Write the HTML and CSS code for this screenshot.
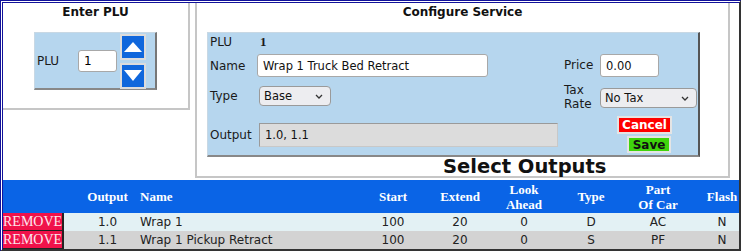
FILE: index.html
```html
<!DOCTYPE html>
<html lang="en">
<head>
  <meta charset="UTF-8" />
  <title>Configure Service</title>
  <link rel="stylesheet" href="styles.css">
</head>
<body>
  <div class="page">
    <div class="top">
      <div class="plu-panel">
        <div class="panel-title">Enter PLU</div>
        <div class="plu-box">
          <label class="plu-label">PLU</label>
          <input class="plu-input" value="1" />
          <div class="spin">
            <button class="spin-btn" title="Up">
              <svg width="22" height="22" viewBox="0 0 22 22"><polygon points="2,16 20,16 11,6" fill="#fff"/></svg>
            </button>
            <button class="spin-btn" title="Down">
              <svg width="22" height="22" viewBox="0 0 22 22"><polygon points="2,5 20,5 11,16" fill="#fff"/></svg>
            </button>
          </div>
        </div>
      </div>

      <div class="service-panel">
        <div class="panel-title">Configure Service</div>
        <div class="config">
          <div class="config-left">
            <div class="row row-plu">
              <span class="lbl">PLU</span>
              <span class="plu-num">1</span>
            </div>
            <div class="row row-name">
              <span class="lbl">Name</span>
              <input class="txt name-input" value="Wrap 1 Truck Bed Retract" />
            </div>
            <div class="row row-type">
              <span class="lbl">Type</span>
              <span class="sel-wrap type-wrap">
                <select class="sel type-sel"><option>Base</option></select>
                <svg class="chev" width="8" height="5" viewBox="0 0 8 5"><polyline points="1,1 4,4 7,1" fill="none" stroke="#333" stroke-width="1.3"/></svg>
              </span>
            </div>
            <div class="row row-output">
              <span class="lbl">Output</span>
              <input class="txt output-input" value="1.0, 1.1" readonly />
            </div>
          </div>
          <div class="config-right">
            <div class="row row-price">
              <span class="lbl-r">Price</span>
              <input class="txt price-input" value="0.00" />
            </div>
            <div class="row row-tax">
              <span class="lbl-r">Tax<br>Rate</span>
              <span class="sel-wrap">
                <select class="sel tax-sel"><option>No Tax</option></select>
                <svg class="chev" width="8" height="5" viewBox="0 0 8 5"><polyline points="1,1 4,4 7,1" fill="none" stroke="#333" stroke-width="1.3"/></svg>
              </span>
            </div>
            <div class="actions">
              <button class="btn-cancel">Cancel</button>
              <button class="btn-save">Save</button>
            </div>
          </div>
        </div>
        <div class="section-title">Select Outputs</div>
      </div>
    </div>

    <table class="outputs">
      <colgroup>
        <col style="width:75px"><col style="width:59px"><col style="width:223px">
        <col style="width:66px"><col style="width:68px"><col style="width:60px">
        <col style="width:74px"><col style="width:60px"><col style="width:68px">
      </colgroup>
      <thead>
        <tr>
          <th></th>
          <th>Output</th>
          <th class="left">Name</th>
          <th>Start</th>
          <th>Extend</th>
          <th>Look<br>Ahead</th>
          <th>Type</th>
          <th>Part<br>Of Car</th>
          <th>Flash</th>
        </tr>
      </thead>
      <tbody>
        <tr class="odd">
          <td class="rm"><button class="remove">REMOVE</button></td>
          <td>1.0</td>
          <td class="left">Wrap 1</td>
          <td>100</td>
          <td>20</td>
          <td>0</td>
          <td>D</td>
          <td>AC</td>
          <td>N</td>
        </tr>
        <tr class="even">
          <td class="rm"><button class="remove">REMOVE</button></td>
          <td>1.1</td>
          <td class="left">Wrap 1 Pickup Retract</td>
          <td>100</td>
          <td>20</td>
          <td>0</td>
          <td>S</td>
          <td>PF</td>
          <td>N</td>
        </tr>
      </tbody>
    </table>
  </div>
</body>
</html>
```

FILE: styles.css
```css
body { margin: 0; font-family: "DejaVu Sans", Verdana, sans-serif; font-size: 12px; color: #1a1a1a; }
.page { width: 741px; height: 251px; box-sizing: border-box; overflow: hidden; border-top: 3px double #11119a; border-left: 3px double #11119a; border-right: 2px solid #333; border-bottom: 2px solid #333; }

.top { display: flex; height: 177px; }
.panel-title { font-weight: bold; text-align: center; line-height: 16px; padding-top: 1px; color: #111; }

/* enter plu */
.plu-panel { width: 185px; height: 105px; border-right: 2px solid #c6c6c6; border-bottom: 2px solid #c6c6c6; }
.plu-box { display: flex; align-items: center; box-sizing: border-box; width: 123px; height: 58px; margin: 12px 0 0 31px; padding: 1px 0 0 2px; background: #b6d6ee; border-top: 1px solid #c8d8e4; border-left: 1px solid #c8d8e4; border-right: 2px solid #777; border-bottom: 2px solid #888; }
.plu-label { width: 41px; }
.plu-input { box-sizing: border-box; width: 39px; height: 22px; padding: 0 5px; border: 1px solid #a8a8a8; border-radius: 3px; font: 12px "DejaVu Sans", sans-serif; }
.spin { display: flex; flex-direction: column; gap: 3px; margin-left: 3px; }
.spin-btn { box-sizing: border-box; width: 26px; height: 26px; padding: 0; background: #1067dc; border: 2px solid #dcdcdc; display: flex; align-items: center; justify-content: center; }

/* configure service */
.service-panel { width: 531px; height: 173px; margin-left: 5px; border-left: 2px solid #c6c6c6; border-right: 2px solid #c6c6c6; border-bottom: 2px solid #c6c6c6; }
.config { display: flex; box-sizing: border-box; width: 493px; height: 125px; margin: 12px 0 0 10px; background: #b6d6ee; border-top: 1px solid #c8d8e4; border-left: 1px solid #c8d8e4; border-right: 2px solid #555; border-bottom: 2px solid #888; }
.config-left { width: 356px; padding: 2px 0 0 2px; box-sizing: border-box; }
.config-right { flex: 1; padding-top: 21px; }
.row { display: flex; align-items: center; }
.lbl { width: 47px; }
.lbl-r { width: 36px; line-height: 13.5px; }
.row-plu { height: 14px; }
.plu-num { margin-left: 3px; font: bold 13px "Liberation Serif", serif; }
.row-name { margin-top: 5px; }
.row-type { margin-top: 9px; }
.row-output { margin-top: 17px; }
.row-tax { margin-top: 7px; height: 27px; }

.txt { box-sizing: border-box; height: 23px; padding: 0 5px; border: 1px solid #a8a8a8; border-radius: 3px; background: #fff; font: 11.5px "DejaVu Sans", sans-serif; color: #111; }
.name-input { width: 231px; }
.price-input { width: 59px; }
.output-input { width: 299px; height: 24px; margin-left: 2px; background: #dcdcdc; border-radius: 0; border-color: #9a9a9a #c8c8c8 #c8c8c8 #9a9a9a; }

.sel-wrap { position: relative; display: flex; }
.type-wrap { margin-left: 2px; }
.sel { appearance: none; -webkit-appearance: none; box-sizing: border-box; height: 20px; padding: 0 0 0 4px; font: 11.5px "DejaVu Sans", sans-serif; color: #111; background: #ededf0; border: 1px solid #9a9a9a; border-radius: 4px; }
.type-sel { width: 72px; }
.tax-sel { width: 97px; }
.chev { position: absolute; right: 8px; top: 8px; pointer-events: none; }

.actions { display: flex; flex-direction: column; align-items: flex-end; padding-right: 26px; }
.btn-cancel, .btn-save { box-sizing: border-box; padding: 0; font: bold 12px "DejaVu Sans", sans-serif; border: 2px solid #e4e4e4; }
.btn-cancel { width: 55px; height: 18px; margin-top: 5px; background: #ff0000; color: #fff; }
.btn-save { width: 44px; height: 17px; margin-top: 2px; margin-right: 1px; background: #3fd40c; color: #111; }

.section-title { margin-left: 246px; font-size: 19.5px; font-weight: bold; line-height: 19px; color: #111; }

/* outputs table */
.outputs { table-layout: fixed; width: 753px; border-collapse: collapse; }
.outputs th { height: 33px; padding: 0; background: #0a64e6; color: #fff; font: bold 13px/15px "Liberation Serif", serif; text-align: center; }
.outputs td { height: 18px; padding: 0; text-align: center; color: #222; }
.outputs .left { text-align: left; padding-left: 3px; }
.odd td { background: #e3f1f4; }
.even td { background: #d3d3d3; }
.outputs td.rm { text-align: left; }
.remove { display: block; box-sizing: border-box; width: 61px; height: 18px; padding: 0; background: #f0124a; color: #fde6ee; font: 14px/16px "Liberation Serif", serif; text-align: left; border: none; border-right: 2px solid #222; border-bottom: 1px solid #222; }
```
